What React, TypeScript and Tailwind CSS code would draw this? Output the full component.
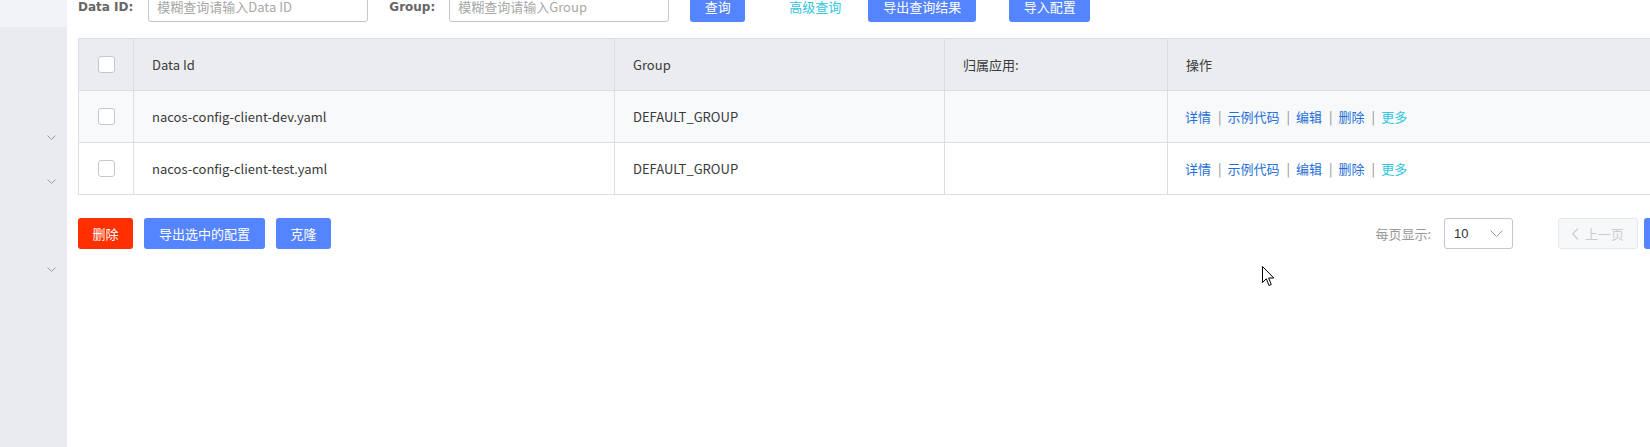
import React from 'react';

const rows = [
  { id: 'nacos-config-client-dev.yaml', group: 'DEFAULT_GROUP', stripe: true },
  { id: 'nacos-config-client-test.yaml', group: 'DEFAULT_GROUP', stripe: false },
];

// sidebar menu rows, only some of them have a sub-menu arrow
const menu = [false, false, false, true, true, false, true];

const Chevron = ({ className = '' }: { className?: string }) => (
  <svg width="9" height="5" viewBox="0 0 9 5" className={className}>
    <path d="M0.5 0.5L4.5 4.5L8.5 0.5" fill="none" stroke="currentColor" strokeWidth="1" />
  </svg>
);

const Checkbox = () => (
  <span className="block w-[17px] h-[17px] mx-auto rounded-[3px] border border-[#c4c6cf] bg-white" />
);

const Sep = () => <span className="inline-block ml-[7px] mr-[6px] text-[#8c8c8c]">|</span>;

const App: React.FC = () => {
  return (
    <div className="relative flex h-[447px] w-full overflow-hidden bg-white font-['Noto_Sans_CJK_SC',sans-serif] text-[13px] text-[#3a3a3a]">
      {/* sidebar */}
      <aside className="w-[67px] shrink-0 bg-[#e9ebf0]">
        <div className="-mt-[17px]">
          {menu.map((hasArrow, i) => (
            <div
              key={i}
              className={`h-[44px] flex items-center justify-end pr-[11px] ${i === 0 ? 'bg-[#f2f3f7]' : ''}`}
            >
              {hasArrow && <Chevron className="text-[#999]" />}
            </div>
          ))}
        </div>
      </aside>

      <main className="flex-1 min-w-0 overflow-hidden pl-[11px]">
        <div className="w-[1684px]">
          {/* search bar */}
          <div className="flex items-center h-[31px] -mt-[9px]">
            <span className="font-['DejaVu_Sans',sans-serif] font-bold text-[12px] text-[#666]">Data ID:</span>
            <div className="ml-[15px] w-[220px] h-[31px] rounded-[3px] border border-[#c4c6cf] flex items-center pl-[8px] text-[#a8a8a8]">
              模糊查询请输入Data ID
            </div>
            <span className="ml-[21px] font-['DejaVu_Sans',sans-serif] font-bold text-[12px] text-[#666]">Group:</span>
            <div className="ml-[14px] w-[220px] h-[31px] rounded-[3px] border border-[#c4c6cf] flex items-center pl-[8px] text-[#a8a8a8]">
              模糊查询请输入Group
            </div>
            <button className="ml-[21px] w-[55px] h-[31px] rounded-[3px] bg-[#5584ff] text-white">查询</button>
            <span className="ml-[44px] text-[#33c6de]">高级查询</span>
            <button className="ml-[27px] w-[108px] h-[31px] rounded-[3px] bg-[#5584ff] text-white">导出查询结果</button>
            <button className="ml-[33px] w-[81px] h-[31px] rounded-[3px] bg-[#5584ff] text-white">导入配置</button>
          </div>

          {/* table */}
          <table className="mt-[16px] w-full table-fixed border-collapse">
            <colgroup>
              <col className="w-[55px]" />
              <col className="w-[481px]" />
              <col className="w-[330px]" />
              <col className="w-[223px]" />
              <col />
            </colgroup>
            <thead>
              <tr className="h-[52px] bg-[#ebecf0] text-left">
                <th className="border border-[#dcdee3] font-normal"><Checkbox /></th>
                <th className="border border-[#dcdee3] pl-[18px] font-normal">Data Id</th>
                <th className="border border-[#dcdee3] pl-[18px] font-normal">Group</th>
                <th className="border border-[#dcdee3] pl-[18px] font-normal">归属应用:</th>
                <th className="border border-[#dcdee3] pl-[18px] font-normal">操作</th>
              </tr>
            </thead>
            <tbody>
              {rows.map((r) => (
                <tr key={r.id} className={`h-[52px] ${r.stripe ? 'bg-[#f8f9fb]' : 'bg-white'}`}>
                  <td className="border border-[#dcdee3]"><Checkbox /></td>
                  <td className="border border-[#dcdee3] pl-[18px]">{r.id}</td>
                  <td className="border border-[#dcdee3] pl-[18px]">{r.group}</td>
                  <td className="border border-[#dcdee3] pl-[18px]"></td>
                  <td className="border border-[#dcdee3] pl-[17px] text-[#1f6fd6]">
                    <span>详情</span><Sep />
                    <span>示例代码</span><Sep />
                    <span>编辑</span><Sep />
                    <span>删除</span><Sep />
                    <span className="text-[#33c6de]">更多</span>
                  </td>
                </tr>
              ))}
            </tbody>
          </table>

          {/* footer: batch actions + pagination */}
          <div className="mt-[23px] flex items-center justify-between">
            <div className="flex items-center gap-[11px]">
              <button className="w-[55px] h-[31px] rounded-[3px] bg-[#ff3000] text-white">删除</button>
              <button className="w-[121px] h-[31px] rounded-[3px] bg-[#5584ff] text-white">导出选中的配置</button>
              <button className="w-[55px] h-[31px] rounded-[3px] bg-[#5584ff] text-white">克隆</button>
            </div>
            <div className="flex items-center">
              <span className="text-[#999]">每页显示:</span>
              <div className="ml-[13px] w-[69px] h-[31px] rounded-[3px] border border-[#c4c6cf] flex items-center justify-between pl-[9px] pr-[9px]">
                <span className="font-['Liberation_Sans',sans-serif] text-[#333]">10</span>
                <svg width="13" height="7" viewBox="0 0 13 7" className="text-[#999]">
                  <path d="M0.5 0.5L6.5 6.5L12.5 0.5" fill="none" stroke="currentColor" strokeWidth="1" />
                </svg>
              </div>
              <button className="ml-[45px] w-[80px] h-[31px] rounded-[3px] border border-[#e6e7eb] bg-[#f7f8fa] text-[#ccc] flex items-center justify-center gap-[6px]">
                <svg width="7" height="12" viewBox="0 0 7 12">
                  <path d="M6 0.5L0.8 6L6 11.5" fill="none" stroke="#ccc" strokeWidth="1.2" />
                </svg>
                上一页
              </button>
              <button className="ml-[6px] w-[32px] h-[31px] rounded-[3px] bg-[#5584ff] text-white">1</button>
              <button className="ml-[6px] w-[80px] h-[31px] rounded-[3px] border border-[#c4c6cf] bg-white text-[#333]">下一页</button>
            </div>
          </div>
        </div>
      </main>

      {/* mouse pointer captured in the screenshot */}
      <svg
        width="13"
        height="21"
        viewBox="0 0 13 21"
        className="absolute left-[1262px] top-[266px]"
      >
        <path
          d="M0.5 0.5L0.5 16.5L4.3 12.8L7 19.5L9.3 18.5L6.6 12L11.8 12Z"
          fill="white"
          stroke="black"
          strokeWidth="1"
          strokeLinejoin="round"
        />
      </svg>
    </div>
  );
};

export default App;
